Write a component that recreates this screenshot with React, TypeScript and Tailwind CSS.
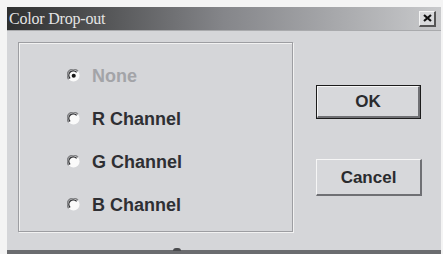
import React from "react";

function Radio({ checked }: { checked?: boolean }) {
  return (
    <svg width="13" height="13" viewBox="0 0 12 12" className="shrink-0">
      <circle cx="6" cy="6" r="5.6" fill="#fafafa" />
      <path d="M10.1 2.1 A5.4 5.4 0 0 0 1.5 9.5" fill="none" stroke="#808184" strokeWidth="1.3" />
      <path d="M8.9 3.1 A4.1 4.1 0 0 0 2.8 8.7" fill="none" stroke="#2e2f32" strokeWidth="1.3" />
      {checked && <circle cx="6.2" cy="6.2" r="1.9" fill="#161616" />}
    </svg>
  );
}

function Row({ label, checked, disabled }: { label: string; checked?: boolean; disabled?: boolean }) {
  return (
    <div className="h-[43px] flex items-center gap-[12px]">
      <Radio checked={checked} />
      <span
        className={
          "text-[18px] font-bold leading-none " +
          (disabled ? "text-[#a3a4a8]" : "text-[#2e2f33]")
        }
        style={{ fontFamily: '"Liberation Sans", Arial, sans-serif' }}
      >
        {label}
      </span>
    </div>
  );
}

export default function App() {
  return (
    <div className="w-[443px] h-[254px] bg-[#f4f4f4] overflow-hidden pt-[7px] pl-[7px] pr-[2px]">
      <div className="flex flex-col h-full">
        <div className="h-[24px] shrink-0 flex items-center justify-between pl-[2px] pr-[5px] bg-gradient-to-r from-[#2f3030] via-[#85868a] to-[#c9cacc] border-b border-[#a9aaad]">
          <span
            className="text-[16px] leading-none text-[#e4e4e4] tracking-[-0.2px]"
            style={{ fontFamily: '"Liberation Serif", "Times New Roman", serif' }}
          >
            Color Drop-out
          </span>
          <div className="w-[17px] h-[16px] bg-[#d9dadc] border-t border-l border-[#f4f4f4] border-r-2 border-b-2 border-r-[#555] border-b-[#555] flex items-center justify-center">
            <svg width="9" height="8" viewBox="0 0 9 8">
              <path d="M1 1 L8 7 M8 1 L1 7" stroke="#111" strokeWidth="2.2" />
            </svg>
          </div>
        </div>
        <div className="flex-1 bg-[#d5d6d9] flex pt-[11px] pl-[11px]">
          <div className="w-[275px] h-[190px] border border-[#9d9ea2] shadow-[inset_1px_1px_0_#f2f2f2,1px_1px_0_#f2f2f2] pt-[11px] pl-[48px] flex flex-col">
            <Row label="None" checked disabled />
            <Row label="R Channel" />
            <Row label="G Channel" />
            <Row label="B Channel" />
          </div>
          <div className="ml-[23px] pt-[43px] flex flex-col">
            <div className="w-[105px] h-[34px] border border-[#1c1c1c]">
              <div className="w-full h-full bg-[#d7d8db] border-t border-l border-[#f6f6f6] border-r-2 border-b-2 border-r-[#6f7074] border-b-[#6f7074] flex items-center justify-center">
                <span
                  className="text-[17px] font-bold leading-none text-[#2a2b2e]"
                  style={{ fontFamily: '"Liberation Sans", Arial, sans-serif' }}
                >
                  OK
                </span>
              </div>
            </div>
            <div className="mt-[40px] w-[106px] h-[37px] bg-[#d7d8db] border-t border-l border-[#f6f6f6] border-r-2 border-b-2 border-r-[#6f7074] border-b-[#6f7074] flex items-center justify-center">
              <span
                className="text-[17px] font-bold leading-none text-[#2a2b2e]"
                style={{ fontFamily: '"Liberation Sans", Arial, sans-serif' }}
              >
                Cancel
              </span>
            </div>
          </div>
        </div>
        <div className="h-[4px] shrink-0 bg-[#6b6c6f] relative">
          <div className="absolute left-[166px] -top-[2px] w-[8px] h-[3px] bg-[#4a4b4e] rounded-t-full" />
        </div>
      </div>
    </div>
  );
}
